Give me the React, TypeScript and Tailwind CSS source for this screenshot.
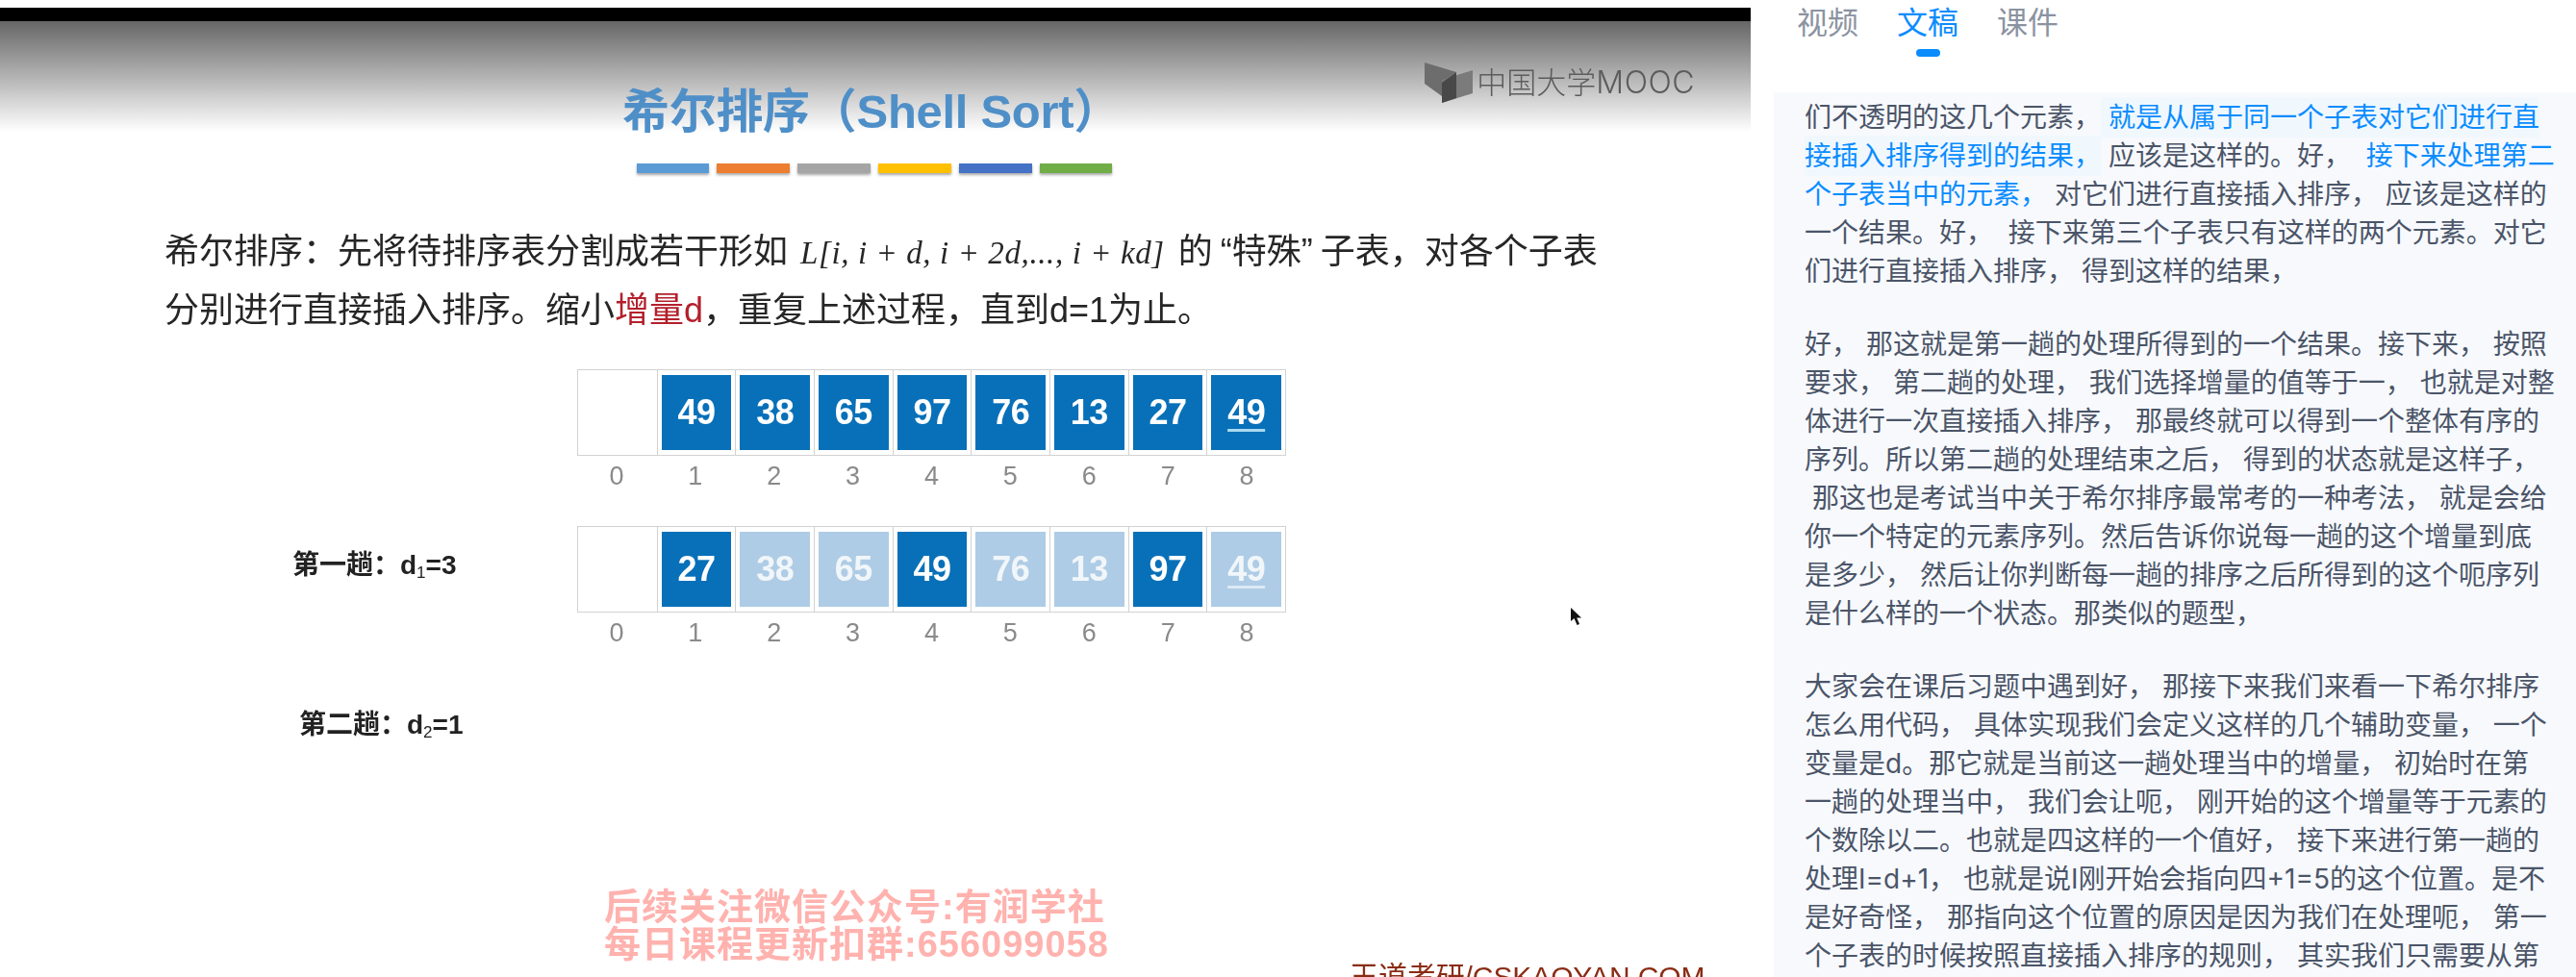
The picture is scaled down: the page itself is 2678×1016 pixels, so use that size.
import React from "react";

const row1 = ["49", "38", "65", "97", "76", "13", "27", "49"];
const row2 = ["27", "38", "65", "49", "76", "13", "97", "49"];
const bars = [
  { w: "w-[75px]", c: "bg-[#5b9bd5]" },
  { w: "w-[76px]", c: "bg-[#ed7d31]" },
  { w: "w-[76px]", c: "bg-[#a5a5a5]" },
  { w: "w-[76px]", c: "bg-[#ffc000]" },
  { w: "w-[76px]", c: "bg-[#4472c4]" },
  { w: "w-[75px]", c: "bg-[#70ad47]" },
];

function Cells({ values, dimmed }: { values: string[]; dimmed: boolean }) {
  return (
    <div>
      <div className="grid h-[90px] w-[737px] grid-cols-9 border border-[#d2d2d2]">
        <div />
        {values.map((v, i) => {
          const light = dimmed && i % 3 !== 0;
          return (
            <div key={i} className="border-l border-[#d2d2d2] py-[5px] pr-[4px] pl-[4px]">
              <div
                className={
                  "flex h-full items-center justify-center text-[36px] font-bold tracking-[-0.5px] " +
                  (light ? "bg-[#aecce5] text-[#f1f6fa]" : "bg-[#0870b8] text-white")
                }
              >
                <span
                  className={
                    i === 7
                      ? "underline decoration-[3px] underline-offset-[5px] " + (light ? "decoration-[#dbe9f3]" : "decoration-[#a9d9ef]")
                      : ""
                  }
                >
                  {v}
                </span>
              </div>
            </div>
          );
        })}
      </div>
      <div className="grid w-[737px] grid-cols-9 text-[#8a8a8a]">
        {[0, 1, 2, 3, 4, 5, 6, 7, 8].map((n) => (
          <div key={n} className="mt-[5px] text-center text-[27px] leading-[32px]">
            {n}
          </div>
        ))}
      </div>
    </div>
  );
}

function Logo() {
  return (
    <div className="mt-[43px] mr-[58px] ml-auto flex items-center gap-[4px] text-[#5c5c5c]">
      <svg width="50" height="43" viewBox="0 0 50 43" aria-hidden="true">
        <polygon points="0,0 33,10 18,21 18,35 0,22" fill="#6d6d6d" />
        <polygon points="50,8 50,32 18,42 18,18" fill="#7b7b7b" />
        <polygon points="18,21 33,10 33,37 18,42" fill="#484848" />
      </svg>
      <span className="text-[31px] leading-[36px] font-light">
        中国大学<span className="font-['Inter',sans-serif] text-[32px] font-light tracking-[0.5px]">MOOC</span>
      </span>
    </div>
  );
}

function Slide() {
  return (
    <div className="relative h-[994px] w-full bg-[linear-gradient(#666666_0px,#ffffff_115px)] font-['Liberation_Sans','Noto_Sans_CJK_SC',sans-serif] blur-[0.6px]">
      <div className="flex h-[123px] items-start pl-[647px]">
        <h1 className="mt-[64px] text-[49px] leading-[60px] font-bold tracking-[-0.3px] whitespace-nowrap text-[#4f8fc8]">
          希尔排序（Shell Sort）
        </h1>
        <Logo />
      </div>
      <div className="mt-[25px] ml-[662px] flex gap-[8px]">
        {bars.map((b, i) => (
          <div key={i} className={"h-[10px] shadow-[0_2px_3px_rgba(0,0,0,0.35)] " + b.w + " " + b.c} />
        ))}
      </div>
      <div className="mt-[52px] pl-[171px] text-[36px] leading-[60px] whitespace-nowrap text-[#262626]">
        <p>
          希尔排序：先将待排序表分割成若干形如
          <span className="mr-[14px] ml-[13px] font-['Liberation_Serif',serif] text-[33px] tracking-[0.6px] italic">
            L[i, i + d, i + 2d,..., i + kd]
          </span>
          的<span className="inline-block w-[20px] text-right">“</span>特殊
          <span className="inline-block w-[20px] text-left">”</span>子表，对各个子表
        </p>
        <p>
          分别进行直接插入排序。缩小<span className="text-[#b3202c]">增量d</span>，重复上述过程，直到d=1为止。
        </p>
      </div>
      <div className="mt-[31px] flex pl-[600px]">
        <Cells values={row1} dimmed={false} />
      </div>
      <div className="mt-[36px] flex pl-[304px]">
        <div className="mt-[21px] w-[296px] text-[28px] leading-[40px] font-bold text-[#222222]">
          第一趟：d<sub className="text-[17px] font-normal">1</sub>=3
        </div>
        <Cells values={row2} dimmed={true} />
      </div>
      <div className="mt-[60px] pl-[311px] text-[28px] leading-[40px] font-bold text-[#222222]">
        第二趟：d<sub className="text-[17px] font-normal">2</sub>=1
      </div>
      <div className="mt-[150px] flex pl-[628px]">
        <div className="w-[775px] text-[38px] leading-[39px] font-bold tracking-[1px] text-[#ffb2ae]">
          <p>后续关注微信公众号:有润学社</p>
          <p>每日课程更新扣群:656099058</p>
        </div>
        <div className="mt-[74px] text-[30px] leading-[36px] tracking-[-0.1px] whitespace-nowrap text-[#8a2c14]">王道考研/CSKAOYAN.COM</div>
      </div>
      <svg className="absolute top-[610px] left-[1633px]" width="12" height="20" viewBox="0 0 12 20" aria-hidden="true">
        <path d="M0 0 L0 14 L3.5 11 L6.5 18 L9 17 L6.2 10.5 L11 10.5 Z" fill="#111111" />
      </svg>
    </div>
  );
}

function Tab({ label, active }: { label: string; active?: boolean }) {
  return (
    <div className="flex w-[64px] flex-col items-center">
      <span className={"text-[32px] leading-[40px] " + (active ? "text-[#0a8cff]" : "text-[#8b93a1]")}>{label}</span>
      {active && <span className="mt-[7px] h-[8px] w-[25px] rounded-full bg-[#0a8cff]" />}
    </div>
  );
}

function Transcript() {
  return (
    <div className="mt-[8px] ml-[24px] h-[920px] overflow-hidden bg-[#f7f9fd] pt-[6px] pl-[32px] text-[28px] leading-[40px] whitespace-pre text-[#4b5568]">
      <p className="mb-[36px]">
        {"们不透明的这几个元素，"}
        <span className="bg-[#f0f8fe] py-[4px] text-[#0a8cff]">{" 就是从属于同一个子表对它们进行直\n接插入排序得到的结果，"}</span>
        {" 应该是这样的。好，  "}
        <span className="text-[#0a8cff]">{"接下来处理第二\n个子表当中的元素，"}</span>
        {" 对它们进行直接插入排序， 应该是这样的\n一个结果。好，  接下来第三个子表只有这样的两个元素。对它\n们进行直接插入排序， 得到这样的结果，"}
      </p>
      <p className="mb-[36px]">
        {"好， 那这就是第一趟的处理所得到的一个结果。接下来， 按照\n要求， 第二趟的处理， 我们选择增量的值等于一， 也就是对整\n体进行一次直接插入排序， 那最终就可以得到一个整体有序的\n序列。所以第二趟的处理结束之后， 得到的状态就是这样子，\n 那这也是考试当中关于希尔排序最常考的一种考法， 就是会给\n你一个特定的元素序列。然后告诉你说每一趟的这个增量到底\n是多少， 然后让你判断每一趟的排序之后所得到的这个呃序列\n是什么样的一个状态。那类似的题型，"}
      </p>
      <p>
        {"大家会在课后习题中遇到好， 那接下来我们来看一下希尔排序\n怎么用代码， 具体实现我们会定义这样的几个辅助变量， 一个\n变量是d。那它就是当前这一趟处理当中的增量， 初始时在第\n一趟的处理当中， 我们会让呃， 刚开始的这个增量等于元素的\n个数除以二。也就是四这样的一个值好， 接下来进行第一趟的\n处理I=d+1， 也就是说I刚开始会指向四+1=5的这个位置。是不\n是好奇怪， 那指向这个位置的原因是因为我们在处理呃， 第一\n个子表的时候按照直接插入排序的规则， 其实我们只需要从第"}
      </p>
    </div>
  );
}

export default function App() {
  return (
    <div className="flex h-[1016px] w-[2678px] overflow-hidden bg-white">
      <div className="w-[1820px] shrink-0 overflow-hidden pt-[8px]">
        <div className="h-[14px] bg-black" />
        <Slide />
      </div>
      <div className="min-w-0 flex-1 font-['Inter','Noto_Sans_CJK_SC',sans-serif]">
        <div className="flex gap-[40px] pt-[4px] pl-[48px]">
          <Tab label="视频" />
          <Tab label="文稿" active />
          <Tab label="课件" />
        </div>
        <div className="h-[29px]" />
        <Transcript />
      </div>
    </div>
  );
}
